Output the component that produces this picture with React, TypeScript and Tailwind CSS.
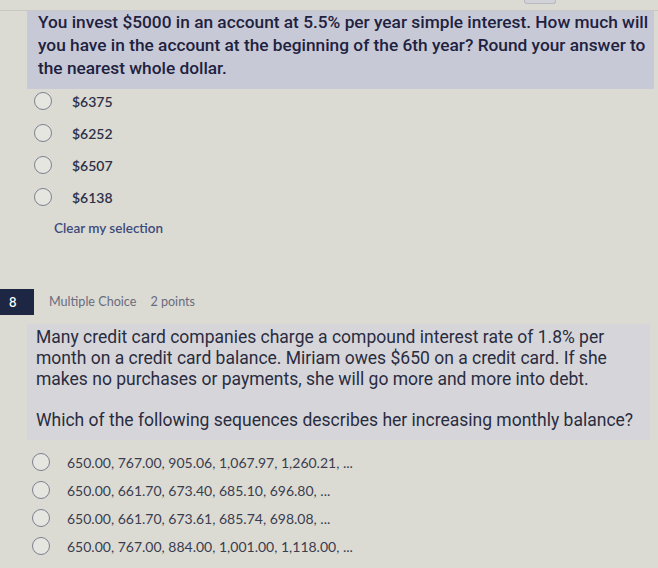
const q1Options = ["$6375", "$6252", "$6507", "$6138"];

const q2Options = [
  "650.00, 767.00, 905.06, 1,067.97, 1,260.21, ...",
  "650.00, 661.70, 673.40, 685.10, 696.80, ...",
  "650.00, 661.70, 673.61, 685.74, 698.08, ...",
  "650.00, 767.00, 884.00, 1,001.00, 1,118.00, ...",
];

function Radio() {
  return (
    <span className="block h-[18px] w-[18px] shrink-0 rounded-full border-[1.5px] border-[#7d8090] bg-[#e6e6e0]" />
  );
}

export default function App() {
  return (
    <div className="relative h-[568px] w-[658px] overflow-hidden bg-[#dcdbd3] font-['Lato','Open_Sans',sans-serif]">
      {/* top toolbar edge */}
      <div className="flex h-[11px] justify-end border-b border-[#c9c9c4] pr-[102px]">
        <div className="h-[4px] w-[32px] rounded-b-[3px] border border-t-0 border-[#b9bac0] bg-[#d2d3d8]" />
      </div>

      <div className="pl-[27px] pr-[4px]">
        <div className="bg-[#c8c9d6] pb-[9px] pl-[11px] pr-0 pt-[0px] font-['Roboto',sans-serif] text-[17.3px] font-medium leading-[23px] text-[#1e2240]">
          You invest $5000 in an account at 5.5% per year simple interest. How much will you have in the account at the
          beginning of the 6th year? Round your answer to the nearest whole dollar.
        </div>

        <div className="mt-[3px] flex flex-col gap-[14px] pl-[7px]">
          {q1Options.map((o) => (
            <div key={o} className="flex h-[18px] items-center gap-[20px]">
              <Radio />
              <span className="text-[14px] font-semibold text-[#2c3048]">{o}</span>
            </div>
          ))}
        </div>

        <div className="mt-[12px] pl-[27px] text-[13.5px] font-semibold text-[#3d4a7c]">Clear my selection</div>
      </div>

      <div className="mt-[51px] flex h-[26px] items-center">
        <div className="flex h-[26px] w-[34px] items-center bg-[#1d2642] pl-[9px] text-[13px] font-semibold text-white">
          8
        </div>
        <span className="ml-[15px] text-[12.6px] text-[#686c80]">Multiple Choice</span>
        <span className="ml-[14px] text-[12.6px] text-[#686c80]">2 points</span>
      </div>

      <div className="mt-[9px] pl-[27px] pr-[8px]">
        <div className="bg-[#d6d6da] px-[9px] pb-[9px] pt-[3px] font-['Roboto',sans-serif] text-[17.5px] leading-[21px] text-[#2a2c40]">
          <p>
            Many credit card companies charge a compound interest rate of 1.8% per month on a credit card balance. Miriam
            owes $650 on a credit card. If she makes no purchases or payments, she will go more and more into debt.
          </p>
          <p className="mt-[20px]">Which of the following sequences describes her increasing monthly balance?</p>
        </div>

        <div className="mt-[13px] flex flex-col gap-[10px] pl-[5px]">
          {q2Options.map((o) => (
            <div key={o} className="flex h-[18px] items-center gap-[17px]">
              <Radio />
              <span className="text-[14px] text-[#3a3d50]">{o}</span>
            </div>
          ))}
        </div>
      </div>
    </div>
  );
}
